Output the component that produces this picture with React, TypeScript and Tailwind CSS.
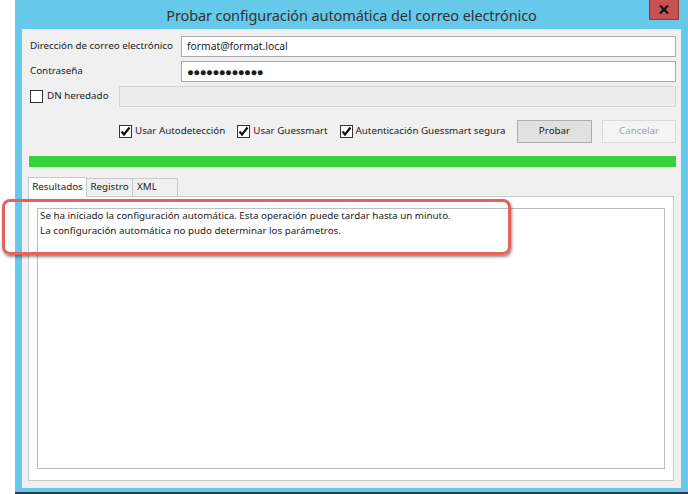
import React from "react";

const font = { fontFamily: '"Noto Sans", "Open Sans", sans-serif' };

function Check({ checked }: { checked?: boolean }) {
  return (
    <div className="w-[13px] h-[13px] border border-[#333333] bg-white flex items-center justify-center shrink-0">
      {checked && (
        <svg width="11" height="11" viewBox="0 0 11 11">
          <path d="M1.5 5.5 L4 8.5 L9.5 1.5" fill="none" stroke="#111" strokeWidth="2.2" />
        </svg>
      )}
    </div>
  );
}

export default function App() {
  return (
    <div className="w-[688px] h-[494px] bg-white overflow-hidden relative" style={font}>
      <div className="ml-[15px] w-[673px] h-[494px] flex flex-col">
        <div className="flex flex-col bg-[#66c9e9] h-[492px]">
          {/* title bar */}
          <div className="h-[29px] relative flex items-center justify-center text-[14.5px] text-[#333333] shrink-0">
            <span className="mt-[2px] tracking-[-0.1px]">Probar configuración automática del correo electrónico</span>
            <div className="absolute right-[9px] top-0 w-[30px] h-[20px] bg-[#c75050] border border-[#8f3a3a] border-t-0 flex items-center justify-center">
              <svg width="10" height="9" viewBox="0 0 10 9">
                <path d="M1 0.5 L9 8.5 M9 0.5 L1 8.5" stroke="#111" strokeWidth="2.2" />
              </svg>
            </div>
          </div>
          {/* client */}
          <div className="mx-[7px] h-[459px] bg-[#f0f0f0] flex flex-col text-[9.8px] text-[#1b1b1b] pl-[7px] pr-[5px]">
            <div className="h-[7px]" />
            <div className="flex items-center h-[21px]">
              <div className="w-[152px] pl-[1px]">Dirección de correo electrónico</div>
              <div className="flex-1 h-[21px] bg-white border border-[#a9a9a9] flex items-center px-[5px] text-[10.3px]">format@format.local</div>
            </div>
            <div className="h-[4px]" />
            <div className="flex items-center h-[21px]">
              <div className="w-[152px] pl-[1px]">Contraseña</div>
              <div className="flex-1 h-[21px] bg-white border border-[#a9a9a9] flex items-center px-[5px] text-[11.5px] tracking-[-0.6px] leading-none">
                ●●●●●●●●●●●●
              </div>
            </div>
            <div className="h-[4px]" />
            <div className="flex items-center h-[21px]">
              <div className="w-[90px] flex items-center gap-[4px] pl-[1px]">
                <Check />
                <span>DN heredado</span>
              </div>
              <div className="flex-1 h-[21px] bg-[#ececec] border border-[#d6d6d6]" />
            </div>
            <div className="h-[13px]" />
            <div className="flex items-center h-[23px]">
              <div className="w-[90px]" />
              <div className="flex items-center gap-[3px]">
                <Check checked />
                <span>Usar Autodetección</span>
              </div>
              <div className="flex items-center gap-[3px] ml-[12px]">
                <Check checked />
                <span>Usar Guessmart</span>
              </div>
              <div className="flex items-center gap-[3px] ml-[12px]">
                <Check checked />
                <span>Autenticación Guessmart segura</span>
              </div>
              <div className="ml-auto flex gap-[10px]">
                <div className="w-[75px] h-[23px] bg-[#e1e1e1] border border-[#adadad] flex items-center justify-center">Probar</div>
                <div className="w-[74px] h-[23px] bg-[#f4f4f4] border border-[#d9d9d9] flex items-center justify-center text-[#a3a3a3]">Cancelar</div>
              </div>
            </div>
            <div className="h-[13px]" />
            <div className="h-[11px] bg-[#3ad23a]" />
            <div className="h-[9px]" />
            {/* tabs */}
            <div className="flex h-[20px] items-end -ml-[1px]">
              <div className="h-[20px] w-[59px] bg-white border border-[#c9c9c9] border-b-0 flex items-center justify-center relative z-10 -mb-[1px]">Resultados</div>
              <div className="h-[18px] w-[46px] bg-[#f0f0f0] border border-[#c9c9c9] border-l-0 border-b-0 flex items-center justify-center">Registro</div>
              <div className="h-[18px] w-[45px] pl-[4px] bg-[#f0f0f0] border border-[#c9c9c9] border-l-0 border-b-0 flex items-center">XML</div>
            </div>
            <div className="-ml-[1px] mr-[2px] h-[285px] bg-white border border-[#c9c9c9] pt-[11px] px-[8px] pb-[11px]">
              <div className="h-full border border-[#bdbdbd] px-[2px] -mt-0 leading-[15px]">
                <div className="-mt-[1px]">Se ha iniciado la configuración automática. Esta operación puede tardar hasta un minuto.</div>
                <div>La configuración automática no pudo determinar los parámetros.</div>
              </div>
            </div>
          </div>
        </div>
        <div className="h-[2px] bg-[#2a3a44]" />
      </div>
      {/* red annotation */}
      <div className="absolute left-[2px] top-[199px] w-[509px] h-[56px] rounded-[8px] border-[3px] border-[#e2625c] shadow-[1px_2px_3px_rgba(0,0,0,0.45)]" />
    </div>
  );
}
